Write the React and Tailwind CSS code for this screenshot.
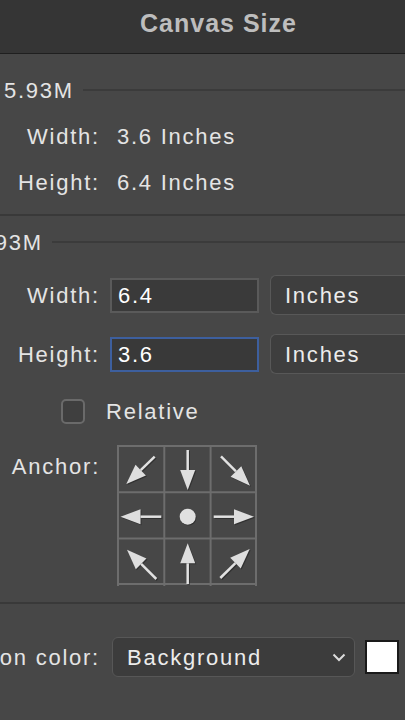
import React from "react";

// arrow from tail (x1,y1) to tip (x2,y2)
function Arrow({ x1, y1, x2, y2 }) {
  const dx = x2 - x1;
  const dy = y2 - y1;
  const len = Math.sqrt(dx * dx + dy * dy);
  const ux = dx / len;
  const uy = dy / len;
  const hl = 20;
  const hw = 7.5;
  const bx = x2 - ux * hl;
  const by = y2 - uy * hl;
  const pts = `${x2},${y2} ${bx - uy * hw},${by + ux * hw} ${bx + uy * hw},${by - ux * hw}`;
  return (
    <g>
      <g transform="translate(1,1)" opacity="0.5">
        <line x1={x1} y1={y1} x2={bx} y2={by} stroke="#1c1c1c" strokeWidth="2.5" />
        <polygon points={pts} fill="#1c1c1c" />
      </g>
      <line x1={x1} y1={y1} x2={bx} y2={by} stroke="#e2e2e2" strokeWidth="2.5" />
      <polygon points={pts} fill="#dedede" />
    </g>
  );
}

function AnchorGrid() {
  const c = [1, 47.3, 93.6, 139];
  return (
    <svg width="140" height="141" viewBox="0 0 140 141">
      {c.map((v) => (
        <line key={"v" + v} x1={v} y1="0" x2={v} y2="141" stroke="#6d6d6d" strokeWidth="2" />
      ))}
      {c.map((v) => (
        <line key={"h" + v} x1="0" y1={v} x2="140" y2={v} stroke="#6d6d6d" strokeWidth="2" />
      ))}
      <Arrow x1={37.7} y1={11.7} x2={9.3} y2={39} />
      <Arrow x1={70.7} y1={5} x2={70.7} y2={45} />
      <Arrow x1={104} y1={11.3} x2={133} y2={40.7} />
      <Arrow x1={44.3} y1={71.7} x2={3.5} y2={71.7} />
      <circle cx="71.5" cy="72.5" r="8" fill="#1c1c1c" opacity="0.5" />
      <circle cx="70.7" cy="71.7" r="8" fill="#e0e0e0" />
      <Arrow x1={96.7} y1={71.7} x2={137} y2={71.7} />
      <Arrow x1={39.3} y1={134} x2={10} y2={104.7} />
      <Arrow x1={70.7} y1={139} x2={70.7} y2={98.3} />
      <Arrow x1={103.3} y1={133} x2={132.7} y2={104} />
    </svg>
  );
}

function InfoRow({ label, value }) {
  return (
    <div className="flex items-center h-[46px]">
      <div className="w-[100px] text-right">{label}</div>
      <div className="ml-[17px]">{value}</div>
    </div>
  );
}

function InputRow({ label, value, active }) {
  return (
    <div className="flex items-center h-[40px]">
      <div className="w-[100px] text-right">{label}</div>
      <div
        className={
          active
            ? "ml-[10px] w-[149px] h-[35px] border-2 border-[#3d5f9e] bg-[#393939] flex items-center pl-[6px] text-white"
            : "ml-[10px] w-[149px] h-[35px] border-2 border-[#5a5a5a] bg-[#3a3a3a] flex items-center pl-[6px] text-white"
        }>
        {value}
      </div>
      <div className="ml-[11px] flex-1 h-[40px] rounded-l-[6px] border border-[#585858] border-r-0 bg-[#3e3e3e] flex items-center pl-[14px] text-[#ececec]">
        Inches
      </div>
    </div>
  );
}

export default function App() {
  return (
    <div className="w-[405px] h-[720px] overflow-hidden bg-[#474747] text-[#e4e4e4] text-[22px] tracking-[0.08em] font-['Liberation_Sans',Arial,sans-serif]">
      <div className="h-[54px] bg-[#353535] border-b border-[#1f1f1f] flex items-center pb-[6px] pl-[140px]">
        <span className="font-bold text-[25px] tracking-[0.04em] text-[#bdbdbd]">Canvas Size</span>
      </div>

      <div className="flex items-center h-[32px] mt-[20px]">
        <span className="pl-[4px]">5.93M</span>
        <div className="ml-[9px] flex-1 h-[2px] bg-[#3b3b3b]" />
      </div>
      <div className="mt-[7px]">
        <InfoRow label="Width:" value="3.6 Inches" />
        <InfoRow label="Height:" value="6.4 Inches" />
      </div>
      <div className="mt-[9px] h-[2px] bg-[#393939]" />

      <div className="flex items-center h-[32px] mt-[10px] overflow-hidden">
        <span className="-ml-[27px] whitespace-nowrap">5.93M</span>
        <div className="ml-[9px] flex-1 h-[2px] bg-[#3b3b3b]" />
      </div>

      <div className="mt-[17px]">
        <InputRow label="Width:" value="6.4" />
      </div>
      <div className="mt-[19px]">
        <InputRow label="Height:" value="3.6" active />
      </div>

      <div className="mt-[24px] flex items-center h-[26px]">
        <div className="ml-[61px] w-[24px] h-[25px] rounded-[5px] border-2 border-[#6a6a6a] bg-[#3f3f3f]" />
        <span className="ml-[21px]">Relative</span>
      </div>

      <div className="mt-[21px] flex items-start">
        <div className="w-[100px] text-right mt-[5px]">Anchor:</div>
        <div className="ml-[17px]">
          <AnchorGrid />
        </div>
      </div>

      <div className="mt-[16px] h-[2px] bg-[#393939]" />

      <div className="mt-[33px] flex items-center h-[40px]">
        <div className="w-[100px] text-right whitespace-nowrap flex justify-end overflow-hidden">
          <span>on color:</span>
        </div>
        <div className="ml-[12px] w-[243px] h-[40px] rounded-[6px] border border-[#575757] bg-[#3c3c3c] flex items-center pl-[14px] pr-[8px] text-[#ececec]">
          <span className="flex-1">Background</span>
          <svg width="14" height="9" viewBox="0 0 14 9">
            <path d="M1.5 1.5 L7 7 L12.5 1.5" fill="none" stroke="#dcdcdc" strokeWidth="2" />
          </svg>
        </div>
        <div className="ml-[10px] w-[34px] h-[34px] bg-white border-2 border-[#1a1a1a]" />
      </div>
    </div>
  );
}
